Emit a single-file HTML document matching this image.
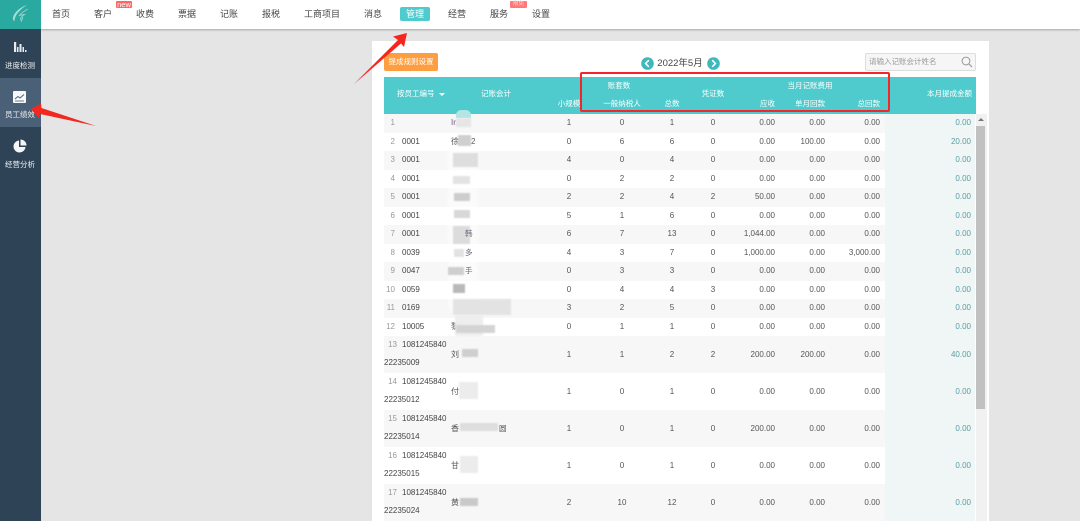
<!DOCTYPE html>
<html lang="zh"><head><meta charset="utf-8"><title>员工绩效</title>
<style>
*{box-sizing:border-box}
html,body{margin:0;padding:0;width:1080px;height:521px;overflow:hidden;background:#e5e5e5}
body{position:relative;font-family:"Liberation Sans","Noto Sans CJK SC",sans-serif;color:#666}
div,span{position:absolute;white-space:nowrap}
#wrap{left:0;top:0;width:1080px;height:521px;overflow:hidden;filter:blur(.35px)}
.top{left:41px;top:0;width:1039px;height:29px;background:#fff;box-shadow:0 1px 2px rgba(0,0,0,.28)}
.nav{top:7px;height:14px;line-height:14px;width:50px;text-align:center;font-size:9px;color:#444}
.side{left:0;top:0;width:41px;height:521px;background:#2f4356}
.logo{left:0;top:0;width:41px;height:29px;background:#2aa9a0}
.act{left:0;top:78px;width:41px;height:49px;background:#4a6076}
.sl{left:0;width:40px;text-align:center;font-size:7.5px;color:#f0f4f6;height:12px;line-height:12px}
.panel{left:372px;top:41px;width:617px;height:490px;background:#fff}
.btn{left:384px;top:53px;width:54px;height:18px;line-height:18px;background:#ff9e40;border-radius:2px;color:#fff;font-size:7.5px;text-align:center}
.date{left:650px;top:56px;width:60px;height:15px;line-height:15px;text-align:center;font-size:9.5px;color:#444}
.search{left:865px;top:53px;width:111px;height:18px;background:#f6f6f6;border:1px solid #ddd;border-radius:2px}
.ph{left:3px;top:1px;line-height:14px;font-size:7.5px;color:#999}
.head{left:384px;top:77px;width:592px;height:37px;background:#4fcbcd}
.h{color:#fff;font-size:7.5px;height:12px;line-height:12px;text-align:center}
.r{left:384px;width:591px;height:18.5px;line-height:18.5px;font-size:8px;color:#555}
.t{height:37px;line-height:37px}
.g{background:linear-gradient(90deg,#f7f7f7 501px,#f0f6f6 501px)}
.w{background:linear-gradient(90deg,#fff 501px,#f0f6f6 501px)}
.r span{top:0;height:100%}
.n{left:0;width:11px;text-align:right;color:#999}
.i{left:18px;color:#444}
.m{left:67px;color:#555}
.a,.b,.c,.d{width:40px;text-align:center}
.a{left:165px}.b{left:218px}.c{left:268px}.d{left:309px}
.e,.f,.o,.p{width:60px;text-align:right}
.e{left:331px}.f{left:381px}.o{left:436px}
.p{left:527px;color:#5a9da3}
.t .n{width:13px;line-height:18px;height:18px}
.t .i{line-height:18px;height:18px}
.t .x{left:0;top:18px;height:18px;line-height:18px;color:#444}
.b1{filter:blur(.8px)}
</style></head><body>
<div id="wrap">
<div class="top"></div>
<div class="nav" style="left:36px">首页</div>
<div class="nav" style="left:78px">客户</div>
<div class="nav" style="left:120px">收费</div>
<div class="nav" style="left:162px">票据</div>
<div class="nav" style="left:204px">记账</div>
<div class="nav" style="left:246px">报税</div>
<div class="nav" style="left:297px">工商项目</div>
<div class="nav" style="left:348px">消息</div>
<div style="left:400px;top:7px;width:30px;height:14px;background:#4fcbcd;border-radius:2px"></div>
<div class="nav" style="left:390px;color:#fff">管理</div>
<div class="nav" style="left:432px">经营</div>
<div class="nav" style="left:474px">服务</div>
<div class="nav" style="left:516px">设置</div>
<div style="left:116px;top:1px;width:16px;height:7px;line-height:7px;background:#f66;border-radius:1px;color:#fff;font-size:7.5px;text-align:center">new</div>
<div style="left:510px;top:1px;width:17px;height:7px;line-height:7px;background:#f77;border-radius:1px;color:#fdd;font-size:5.5px;text-align:center">限免</div>

<div class="side"></div>
<div class="logo"></div>
<svg style="position:absolute;left:11px;top:4px" width="20" height="21" viewBox="0 0 20 21"><path d="M16 1C10 3 3 8 2 14c-.2 1.500.5 3 1.500 3C3.500 12 8 6 16 1z" fill="#a9ded9"/><path d="M16.500 5c-2 2-6 3-8 6.500 2-.5 3-1 5-1-2 1.500-3.500 2.500-4 4l.8 2.500c1-2 1.500-3 1.500-4" fill="none" stroke="#8dd2cc" stroke-width="1"/></svg>
<div class="act"></div>
<svg style="position:absolute;left:13px;top:41px" width="14" height="12" viewBox="0 0 14 12"><path d="M1 1h2.200v10H1zM4 6h1.500v5H4zM6.500 3h2v8h-2zM9.500 6H11v5H9.500zM12 9h1.500v2H12z" fill="#e6ebee"/></svg>
<div class="sl" style="top:60px">进度检测</div>
<svg style="position:absolute;left:13px;top:91px" width="14" height="13" viewBox="0 0 14 13"><rect x="0" y="0" width="13" height="12" rx="1" fill="#f7f9fa"/><path d="M2 8l3-2.500 2 1.500 4-3.500" fill="none" stroke="#4a6076" stroke-width="1"/><path d="M2 10h9" stroke="#4a6076" stroke-width=".8"/></svg>
<div class="sl" style="top:109px">员工绩效</div>
<svg style="position:absolute;left:13px;top:139px" width="14" height="14" viewBox="0 0 14 14"><path d="M6 1.500a6 6 0 1 0 6.500 6.500H6z" fill="#f4f6f7"/><path d="M7.500 0.500a6 6 0 0 1 6 6h-6z" fill="#f4f6f7"/></svg>
<div class="sl" style="top:159px">经营分析</div>

<div class="panel"></div>
<div class="btn">提成规则设置</div>
<svg style="position:absolute;left:641px;top:57px" width="13" height="13" viewBox="0 0 13 13"><circle cx="6.500" cy="6.500" r="6.300" fill="#3fb8bb"/><path d="M7.800 3.200L4.600 6.500l3.200 3.300" fill="none" stroke="#fff" stroke-width="1.600"/></svg>
<div class="date">2022年5月</div>
<svg style="position:absolute;left:707px;top:57px" width="13" height="13" viewBox="0 0 13 13"><circle cx="6.500" cy="6.500" r="6.300" fill="#3fb8bb"/><path d="M5.200 3.200l3.200 3.300-3.200 3.300" fill="none" stroke="#fff" stroke-width="1.600"/></svg>
<div class="search"><div class="ph">请输入记账会计姓名</div>
<svg style="position:absolute;left:95px;top:2px" width="12" height="12" viewBox="0 0 12 12"><circle cx="5" cy="5" r="3.900" fill="none" stroke="#999" stroke-width="1"/><path d="M8 8l3 3" stroke="#999" stroke-width="1.200"/></svg></div>

<div class="head"></div>
<div class="h" style="left:397px;top:88px">按员工编号</div>
<div style="left:439px;top:93px;width:0;height:0;border:3px solid transparent;border-top:3px solid #fff;border-bottom:0"></div>
<div class="h" style="left:466px;top:88px;width:60px">记账会计</div>
<div class="h" style="left:549px;top:98px;width:40px">小规模</div>
<div class="h" style="left:589px;top:80px;width:60px">账套数</div>
<div class="h" style="left:592px;top:98px;width:60px">一般纳税人</div>
<div class="h" style="left:652px;top:98px;width:40px">总数</div>
<div class="h" style="left:693px;top:88px;width:40px">凭证数</div>
<div class="h" style="left:770px;top:80px;width:80px">当月记账费用</div>
<div class="h" style="left:735px;top:98px;width:40px;text-align:right">应收</div>
<div class="h" style="left:775px;top:98px;width:50px;text-align:right">单月回款</div>
<div class="h" style="left:830px;top:98px;width:50px;text-align:right">总回款</div>
<div class="h" style="left:902px;top:88px;width:70px;text-align:right">本月提成金额</div>

<div class="r g" style="top:114px"><span class="n">1</span><span class="m" style="color:#7a4f8a">Ir</span><span class="a">1</span><span class="b">0</span><span class="c">1</span><span class="d">0</span><span class="e">0.00</span><span class="f">0.00</span><span class="o">0.00</span><span class="p">0.00</span></div>
<div class="r w" style="top:132.500px"><span class="n">2</span><span class="i">0001</span><span class="m">徐</span><span style="left:87px">2</span><span class="a">0</span><span class="b">6</span><span class="c">6</span><span class="d">0</span><span class="e">0.00</span><span class="f">100.00</span><span class="o">0.00</span><span class="p">20.00</span></div>
<div class="r g" style="top:151px"><span class="n">3</span><span class="i">0001</span><span class="a">4</span><span class="b">0</span><span class="c">4</span><span class="d">0</span><span class="e">0.00</span><span class="f">0.00</span><span class="o">0.00</span><span class="p">0.00</span></div>
<div class="r w" style="top:169.500px"><span class="n">4</span><span class="i">0001</span><span class="a">0</span><span class="b">2</span><span class="c">2</span><span class="d">0</span><span class="e">0.00</span><span class="f">0.00</span><span class="o">0.00</span><span class="p">0.00</span></div>
<div class="r g" style="top:188px"><span class="n">5</span><span class="i">0001</span><span class="a">2</span><span class="b">2</span><span class="c">4</span><span class="d">2</span><span class="e">50.00</span><span class="f">0.00</span><span class="o">0.00</span><span class="p">0.00</span></div>
<div class="r w" style="top:206.500px"><span class="n">6</span><span class="i">0001</span><span class="a">5</span><span class="b">1</span><span class="c">6</span><span class="d">0</span><span class="e">0.00</span><span class="f">0.00</span><span class="o">0.00</span><span class="p">0.00</span></div>
<div class="r g" style="top:225px"><span class="n">7</span><span class="i">0001</span><span class="a">6</span><span class="b">7</span><span class="c">13</span><span class="d">0</span><span class="e">1,044.00</span><span class="f">0.00</span><span class="o">0.00</span><span class="p">0.00</span></div>
<div class="r w" style="top:243.500px"><span class="n">8</span><span class="i">0039</span><span class="a">4</span><span class="b">3</span><span class="c">7</span><span class="d">0</span><span class="e">1,000.00</span><span class="f">0.00</span><span class="o">3,000.00</span><span class="p">0.00</span></div>
<div class="r g" style="top:262px"><span class="n">9</span><span class="i">0047</span><span class="a">0</span><span class="b">3</span><span class="c">3</span><span class="d">0</span><span class="e">0.00</span><span class="f">0.00</span><span class="o">0.00</span><span class="p">0.00</span></div>
<div class="r w" style="top:280.500px"><span class="n">10</span><span class="i">0059</span><span class="a">0</span><span class="b">4</span><span class="c">4</span><span class="d">3</span><span class="e">0.00</span><span class="f">0.00</span><span class="o">0.00</span><span class="p">0.00</span></div>
<div class="r g" style="top:299px"><span class="n">11</span><span class="i">0169</span><span class="a">3</span><span class="b">2</span><span class="c">5</span><span class="d">0</span><span class="e">0.00</span><span class="f">0.00</span><span class="o">0.00</span><span class="p">0.00</span></div>
<div class="r w" style="top:317.500px"><span class="n">12</span><span class="i">10005</span><span class="m">黎</span><span class="a">0</span><span class="b">1</span><span class="c">1</span><span class="d">0</span><span class="e">0.00</span><span class="f">0.00</span><span class="o">0.00</span><span class="p">0.00</span></div>
<div class="r t g" style="top:336px"><span class="n">13</span><span class="i">1081245840</span><span class="x">22235009</span><span class="m">刘</span><span class="a">1</span><span class="b">1</span><span class="c">2</span><span class="d">2</span><span class="e">200.00</span><span class="f">200.00</span><span class="o">0.00</span><span class="p">40.00</span></div>
<div class="r t w" style="top:373px"><span class="n">14</span><span class="i">1081245840</span><span class="x">22235012</span><span class="m">付</span><span class="a">1</span><span class="b">0</span><span class="c">1</span><span class="d">0</span><span class="e">0.00</span><span class="f">0.00</span><span class="o">0.00</span><span class="p">0.00</span></div>
<div class="r t g" style="top:410px"><span class="n">15</span><span class="i">1081245840</span><span class="x">22235014</span><span class="m">香</span><span style="left:115px;font-size:7.500px">圆</span><span class="a">1</span><span class="b">0</span><span class="c">1</span><span class="d">0</span><span class="e">200.00</span><span class="f">0.00</span><span class="o">0.00</span><span class="p">0.00</span></div>
<div class="r t w" style="top:447px"><span class="n">16</span><span class="i">1081245840</span><span class="x">22235015</span><span class="m">甘</span><span class="a">1</span><span class="b">0</span><span class="c">1</span><span class="d">0</span><span class="e">0.00</span><span class="f">0.00</span><span class="o">0.00</span><span class="p">0.00</span></div>
<div class="r t g" style="top:484px"><span class="n">17</span><span class="i">1081245840</span><span class="x">22235024</span><span class="m">黄</span><span class="a">2</span><span class="b">10</span><span class="c">12</span><span class="d">0</span><span class="e">0.00</span><span class="f">0.00</span><span class="o">0.00</span><span class="p">0.00</span></div>

<div style="left:448px;top:150px;width:30px;height:160px;background:rgba(255,255,255,.55);filter:blur(2px)"></div>
<div style="left:456px;top:110px;width:15px;height:8px;background:#b5e4e5;border-radius:5px 5px 0 0"></div>
<div class="b1" style="left:456px;top:118px;width:15px;height:9px;background:#e6e6e6"></div>
<div class="b1" style="left:458px;top:135px;width:13px;height:11px;background:#cfcfcf"></div>
<div class="b1" style="left:453px;top:153px;width:25px;height:14px;background:#dedede"></div>
<div class="b1" style="left:453px;top:176px;width:17px;height:8px;background:#e3e3e3"></div>
<div class="b1" style="left:454px;top:193px;width:16px;height:8px;background:#cdcdcd"></div>
<div class="b1" style="left:454px;top:210px;width:16px;height:8px;background:#d8d8d8"></div>
<div class="b1" style="left:453px;top:226px;width:17px;height:18px;background:#dcdcdc"></div>
<span style="left:465px;top:228px;font-size:7.500px;color:#667">韩</span>
<div class="b1" style="left:454px;top:249px;width:10px;height:8px;background:#e2e2e2"></div>
<span style="left:465px;top:247px;font-size:7.500px;color:#667">多</span>
<div class="b1" style="left:448px;top:267px;width:16px;height:8px;background:#cfcfcf"></div>
<span style="left:465px;top:265px;font-size:7.500px;color:#667">手</span>
<div class="b1" style="left:453px;top:284px;width:12px;height:9px;background:#b9b9b9"></div>
<div class="b1" style="left:453px;top:299px;width:58px;height:16px;background:#e3e3e3"></div>
<div class="b1" style="left:455px;top:315px;width:28px;height:21px;background:#eeeeee"></div>
<div class="b1" style="left:456px;top:325px;width:39px;height:8px;background:#d4d4d4"></div>
<div class="b1" style="left:462px;top:349px;width:16px;height:8px;background:#cfcfcf"></div>
<div class="b1" style="left:459px;top:382px;width:19px;height:17px;background:#ececec"></div>
<div class="b1" style="left:460px;top:423px;width:38px;height:8px;background:#dedede"></div>
<div class="b1" style="left:460px;top:456px;width:18px;height:17px;background:#ececec"></div>
<div class="b1" style="left:460px;top:498px;width:18px;height:8px;background:#c9c9c9"></div>

<div style="left:976px;top:114px;width:11px;height:407px;background:#f1f1f1"></div>
<div style="left:976px;top:126px;width:9px;height:283px;background:#c1c1c1"></div>
<div style="left:978px;top:118px;width:0;height:0;border:3px solid transparent;border-bottom:3px solid #777;border-top:0"></div>

<div style="left:580px;top:72px;width:310px;height:39.500px;border:2px solid #f3272b;border-radius:2px"></div>
<svg style="position:absolute;left:0;top:0" width="1080" height="521" viewBox="0 0 1080 521">
<path d="M407 33L393 36.500 398 40 354 84 401 43.500 404 47z" fill="#f4271f"/>
<path d="M31 109L41 103.500 41.500 108 96 126 40 114 39 118z" fill="#f4271f"/>
</svg>
</div>
</body></html>
